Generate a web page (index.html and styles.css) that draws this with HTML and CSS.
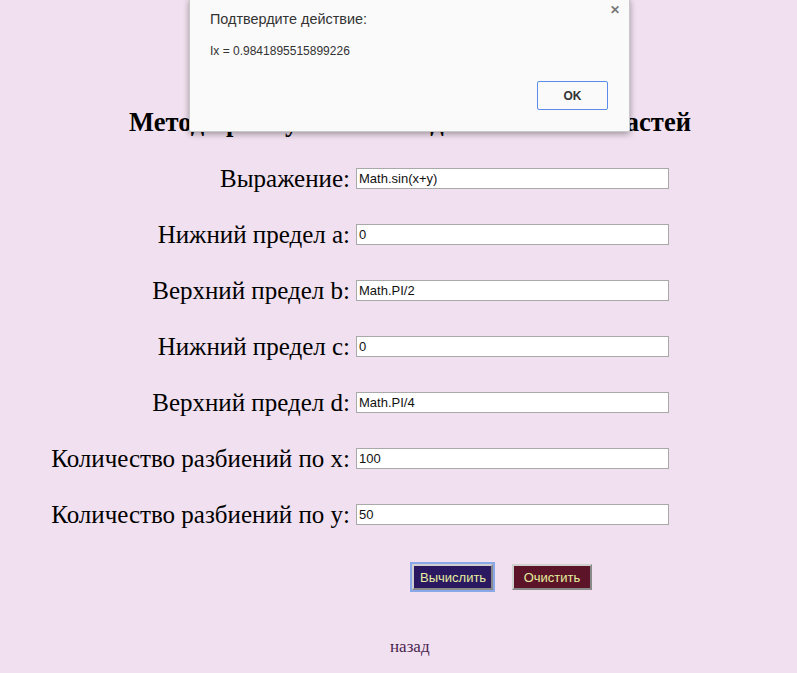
FILE: index.html
```html
<!DOCTYPE html>
<html lang="ru">
<head>
<meta charset="utf-8">
<title>Метод</title>
<link rel="stylesheet" href="styles.css">
</head>
<body>
<main class="page">
  <h1 class="title">Метод прямоугольников для плоских областей</h1>
  <form class="form">
    <label class="lbl">Выражение:</label><input class="inp" type="text" value="Math.sin(x+y)">
    <label class="lbl">Нижний предел a:</label><input class="inp" type="text" value="0">
    <label class="lbl">Верхний предел b:</label><input class="inp" type="text" value="Math.PI/2">
    <label class="lbl">Нижний предел c:</label><input class="inp" type="text" value="0">
    <label class="lbl">Верхний предел d:</label><input class="inp" type="text" value="Math.PI/4">
    <label class="lbl">Количество разбиений по x:</label><input class="inp" type="text" value="100">
    <label class="lbl">Количество разбиений по y:</label><input class="inp" type="text" value="50">
  </form>
  <div class="buttons">
    <button class="btn btn-calc" type="button">Вычислить</button>
    <button class="btn btn-clear" type="button">Очистить</button>
  </div>
  <div class="back"><a href="#" class="back-link">назад</a></div>
</main>
<div class="dialog">
  <div class="dlg-title">Подтвердите действие:</div>
  <div class="dlg-msg">Ix = 0.9841895515899226</div>
  <div class="dlg-actions"><button class="dlg-ok" type="button">OK</button></div>
  <span class="dlg-close">&#x2715;</span>
</div>
</body>
</html>
```

FILE: styles.css
```css
html, body {
  margin: 0;
  padding: 0;
  background: #f1e0ef;
}
body {
  font-family: "Liberation Serif", "Times New Roman", serif;
  color: #000;
  width: 797px;
  height: 673px;
  overflow: hidden;
  position: relative;
}
.page {
  display: flex;
  flex-direction: column;
}
.title {
  margin: 106px 0 0 0;
  padding-left: 23px;
  font-size: 26.5px;
  font-weight: bold;
  text-align: center;
  line-height: 32px;
  white-space: nowrap;
}
.form {
  display: grid;
  grid-template-columns: 350px 313px;
  column-gap: 6px;
  row-gap: 35px;
  margin-top: 30px;
  align-items: center;
}
.lbl {
  text-align: right;
  font-size: 25px;
  line-height: 21px;
  white-space: nowrap;
}
.inp {
  box-sizing: border-box;
  width: 313px;
  height: 21px;
  margin: 0;
  padding: 1px 2px;
  border: 1px solid #a9a9a9;
  background: #fff;
  font-family: "Liberation Sans", Arial, sans-serif;
  font-size: 13px;
  color: #111;
}
.buttons {
  display: flex;
  gap: 19px;
  margin: 39px 0 0 412px;
  align-items: center;
}
.btn {
  font-family: "Liberation Sans", Arial, sans-serif;
  font-size: 13px;
  color: #e6eea0;
  height: 26px;
  padding: 0 6px;
  border: 2px solid;
  border-color: #d0d0d0 #8a8a8a #8a8a8a #d0d0d0;
}
.btn-calc {
  background: #2a1960;
  outline: 2px solid #89a8e8;
  outline-offset: 0;
  width: 81px;
}
.btn-clear {
  background: #5c1528;
  width: 80px;
}
.back {
  margin-top: 47px;
  padding-left: 390px;
}
.back-link {
  font-size: 17px;
  color: #4b1f4f;
  text-decoration: none;
}
.dialog {
  position: absolute;
  left: 189px;
  top: -2px;
  width: 441px;
  height: 134px;
  box-sizing: border-box;
  background: #fafafa;
  border: 1px solid #c8c8c8;
  border-radius: 2px;
  box-shadow: 0 2px 6px rgba(0,0,0,0.35);
  font-family: "Liberation Sans", Arial, sans-serif;
}
.dlg-title {
  position: absolute;
  left: 20px;
  top: 12px;
  font-size: 14.4px;
  color: #333;
}
.dlg-msg {
  position: absolute;
  left: 20px;
  top: 45px;
  font-size: 12px;
  color: #333;
}
.dlg-actions {
  position: absolute;
  right: 21px;
  top: 82px;
}
.dlg-ok {
  width: 71px;
  height: 29px;
  background: #fafafa;
  border: 1px solid #5b8de8;
  border-radius: 2px;
  font-family: "Liberation Sans", Arial, sans-serif;
  font-size: 12px;
  font-weight: bold;
  color: #333;
}
.dlg-close {
  position: absolute;
  right: 9px;
  top: 4px;
  font-size: 12px;
  font-weight: bold;
  color: #777;
}
```
